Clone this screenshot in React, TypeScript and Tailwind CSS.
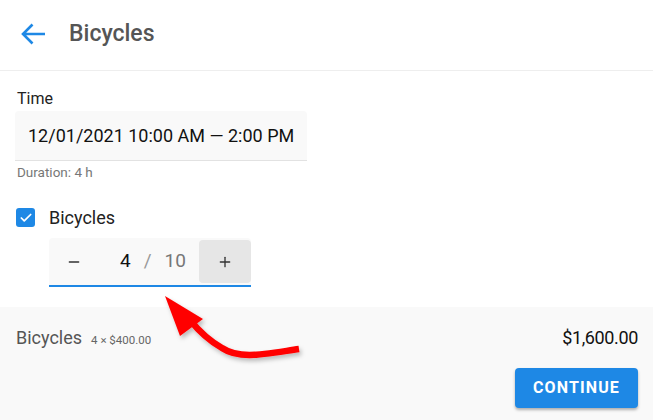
import { Check, Minus, Plus } from "lucide-react";

function Stepper() {
  return (
    <div className="ml-[33px] mt-[7px] flex h-[49px] w-[202px] items-stretch rounded-t bg-[#f9f9f9] border-b-2 border-[#1e88e5] pt-[2px] pb-[2px]">
      <div className="flex w-[50px] items-center justify-center text-[#333]">
        <Minus size={16} strokeWidth={2} />
      </div>
      <div className="flex flex-1 items-center justify-center gap-[13px] text-[19px] pl-[8px]">
        <span className="text-[#111]">4</span>
        <span className="text-[#999]">/</span>
        <span className="text-[#777]">10</span>
      </div>
      <div className="flex w-[52px] items-center justify-center rounded bg-[#e6e6e6] text-[#333]">
        <Plus size={16} strokeWidth={2} />
      </div>
    </div>
  );
}

export default function App() {
  return (
    <div
      className="relative flex h-[420px] w-[653px] flex-col bg-white"
      style={{ fontFamily: "Roboto, 'Noto Sans', sans-serif" }}
    >
      <header className="flex h-[71px] items-center border-b border-[#eeeeee] pl-[20px]">
        <svg width="26" height="24" viewBox="0 0 26 24" className="-mt-[2px]">
          <path
            d="M25 12H3.5M12.5 2.5L3 12l9.5 9.5"
            fill="none"
            stroke="#1e88e5"
            strokeWidth="2.6"
          />
        </svg>
        <h1 className="ml-[23px] -mt-[2px] text-[23px] font-medium text-[#555]">Bicycles</h1>
      </header>

      <main className="flex-1 px-[16px] pt-[18px]">
        <label className="block text-[16px] leading-[20px] text-[#222] ml-[1px]">Time</label>
        <div className="mt-[2px] flex h-[50px] w-[292px] items-center rounded-t bg-[#f9f9f9] border-b border-[#e2e2e2] pl-[13px] text-[18px] text-[#111] -ml-[1px]">
          12/01/2021 10:00 AM — 2:00 PM
        </div>
        <p className="mt-[2px] ml-[1px] text-[13.5px] leading-[18px] text-[#777]">Duration: 4 h</p>

        <div className="mt-[23px] flex items-center">
          <span className="flex h-[19px] w-[19px] items-center justify-center rounded-[3px] bg-[#1e88e5] text-white">
            <Check size={14} strokeWidth={3} />
          </span>
          <span className="ml-[14px] text-[18px] text-[#222]">Bicycles</span>
        </div>

        <Stepper />
      </main>

      <footer className="flex h-[113px] flex-col bg-[#f9f9f9] px-[16px] pt-[17px]">
        <div className="flex items-center justify-between">
          <div className="flex items-baseline">
            <span className="text-[18px] text-[#555]">Bicycles</span>
            <span className="ml-[9px] text-[11.5px] text-[#666]">4 × $400.00</span>
          </div>
          <span className="mr-[-1px] text-[18px] tracking-[-0.02em] text-[#111]">$1,600.00</span>
        </div>
        <div className="mt-[17px] flex justify-end">
          <button className="mr-[-1px] h-[40px] w-[123px] rounded bg-[#1e88e5] text-[16px] font-bold uppercase tracking-[0.07em] text-white shadow-[0_2px_3px_rgba(0,0,0,0.3)]">
            Continue
          </button>
        </div>
      </footer>

      <svg
        className="pointer-events-none absolute left-0 top-0"
        width="653"
        height="420"
        viewBox="0 0 653 420"
      >
        <defs>
          <filter id="sh" x="-20%" y="-20%" width="140%" height="140%">
            <feDropShadow dx="2" dy="3" stdDeviation="2" floodColor="#000" floodOpacity="0.25" />
          </filter>
        </defs>
        <g filter="url(#sh)">
          <path
            d="M299 349 C 265 354, 240 360, 222 348 C 208 340, 198 330, 190 320"
            fill="none"
            stroke="#ff0000"
            strokeWidth="6.5"
          />
          <polygon points="165,296 203,319 180,336" fill="#ff0000" />
        </g>
      </svg>
    </div>
  );
}
